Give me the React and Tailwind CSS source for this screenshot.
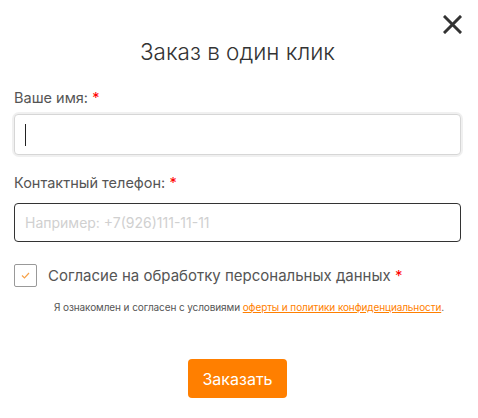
export default function App() {
  return (
    <div className="relative w-[478px] h-[418px] bg-white font-['Inter',sans-serif] text-[#333]">
      <button className="absolute right-[16px] top-[15px] w-[19px] h-[19px] flex items-center justify-center">
        <svg width="19" height="19" viewBox="0 0 19 19">
          <path d="M2 2 L17 17 M17 2 L2 17" stroke="#333" strokeWidth="3" strokeLinecap="square" />
        </svg>
      </button>

      <div className="pl-[14px] pr-[17px] pt-[38px] flex flex-col">
        <h2 className="text-center text-[22.5px] leading-[28px] font-light text-[#333]">Заказ в один клик</h2>

        <label className="mt-[23px] text-[14.5px] leading-[18px] text-[#555]">
          Ваше имя: <span className="text-[#f00]">*</span>
        </label>
        <div className="mt-[7px] rounded-[5px] shadow-[0_0_0_2px_#f0f0f0]">
          <div className="h-[41px] rounded-[4px] border border-[#d6d6d6] bg-white flex items-center px-[10px]">
            <div className="w-[1px] h-[22px] bg-[#222]" />
          </div>
        </div>

        <label className="mt-[19px] text-[14.5px] leading-[18px] text-[#555]">
          Контактный телефон: <span className="text-[#f00]">*</span>
        </label>
        <input
          className="mt-[11px] h-[39px] rounded-[4px] border border-[#333] px-[10px] text-[14px] outline-none placeholder:text-[#d0d0d0]"
          placeholder="Например: +7(926)111-11-11"
        />

        <div className="mt-[22px] flex items-center gap-[11px]">
          <div className="w-[23px] h-[23px] rounded-[2px] border border-[#999] flex items-center justify-center">
            <svg width="9" height="7" viewBox="0 0 9 7">
              <path d="M1 3.5 L3.5 6 L8 1" stroke="#f7a24a" strokeWidth="1.2" fill="none" />
            </svg>
          </div>
          <span className="text-[15px] leading-[20px] text-[#555]">
            Согласие на обработку персональных данных <span className="text-[#f00]">*</span>
          </span>
        </div>

        <p className="mt-[13px] pl-[23px] text-center text-[10px] leading-[14px] tracking-[-0.1px] text-[#555]">
          Я ознакомлен и согласен с условиями{' '}
          <a className="text-[#ff7f00] underline">оферты и политики конфиденциальности</a>.
        </p>

        <div className="mt-[45px] flex justify-center">
          <button className="w-[99px] h-[39px] rounded-[4px] bg-[#ff7f00] text-white text-[16px]">Заказать</button>
        </div>
      </div>
    </div>
  )
}
